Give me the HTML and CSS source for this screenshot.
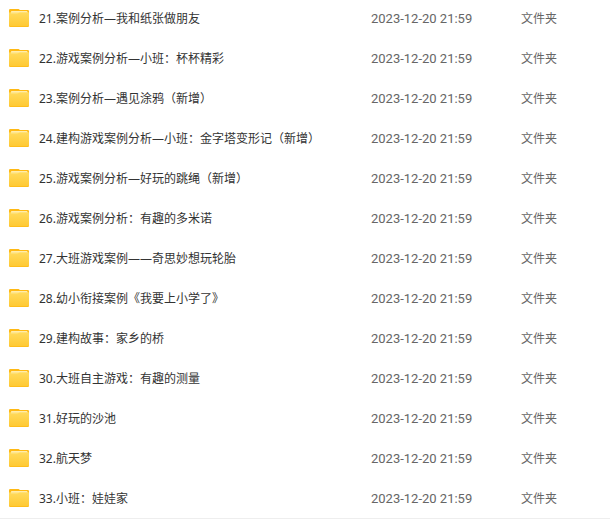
FILE: index.html
```html
<!DOCTYPE html>
<html lang="zh-CN">
<head>
    <meta charset="UTF-8">
    <meta name="viewport" content="width=device-width, initial-scale=1.0">
    <title>文件列表</title>
    <link rel="stylesheet" href="styles.css">
</head>
<body>
    <!-- folder icon shared by every row -->
    <svg class="icon-defs" width="0" height="0" aria-hidden="true">
        <defs>
            <linearGradient id="folderFront" x1="0" y1="0" x2="0" y2="1">
                <stop offset="0" stop-color="#ffdc61"/>
                <stop offset="1" stop-color="#ffc933"/>
            </linearGradient>
            <linearGradient id="folderPaper" x1="0" y1="0" x2="0" y2="1">
                <stop offset="0" stop-color="#fff0bd"/>
                <stop offset="1" stop-color="#ffdc61"/>
            </linearGradient>
            <symbol id="folder" viewBox="0 0 20 20">
                <path fill="#ffb914" d="M0 1.2Q0 0 1.2 0H9.4Q10.2 0 10.8 1H18.8Q20 1 20 2.2V16.8Q20 18 18.8 18H1.2Q0 18 0 16.8Z"/>
                <path fill="url(#folderFront)" d="M0 4.4Q0 3.2 1 3.2H2V2.8Q2 2 3 2H17.4Q18.4 2 18.4 3H19Q20 3.2 20 4.4V16Q20 17.3 18.8 17.3H1.2Q0 17.3 0 16Z"/>
                <path fill="url(#folderPaper)" d="M2 5V3Q2 2 3 2H17.4Q18.4 2 18.4 3V3.4H10.8Q9.8 3.4 9.2 4.2Q8.6 5 7.6 5Z"/>
            </symbol>
        </defs>
    </svg>

    <table class="file-list">
        <colgroup>
            <col class="col-name">
            <col class="col-date">
            <col class="col-type">
        </colgroup>
        <tbody id="fileRows"></tbody>
    </table>

    <script>
        const folders = [
            '21.案例分析—我和纸张做朋友',
            '22.游戏案例分析—小班：杯杯精彩',
            '23.案例分析—遇见涂鸦（新增）',
            '24.建构游戏案例分析—小班：金字塔变形记（新增）',
            '25.游戏案例分析—好玩的跳绳（新增）',
            '26.游戏案例分析：有趣的多米诺',
            '27.大班游戏案例——奇思妙想玩轮胎',
            '28.幼小衔接案例《我要上小学了》',
            '29.建构故事：家乡的桥',
            '30.大班自主游戏：有趣的测量',
            '31.好玩的沙池',
            '32.航天梦',
            '33.小班：娃娃家'
        ];

        document.getElementById('fileRows').innerHTML = folders.map(name => `
            <tr>
                <td>
                    <div class="file-name">
                        <svg class="folder-icon" aria-hidden="true"><use href="#folder"/></svg>
                        <span>${name}</span>
                    </div>
                </td>
                <td class="file-date">2023-12-20 21:59</td>
                <td class="file-type">文件夹</td>
            </tr>`).join('');
    </script>
</body>
</html>
```
FILE: styles.css
```css
body {
    margin: 0;
    background-color: #fff;
    color: #333;
    font-family: "Noto Sans", "Noto Sans CJK SC", sans-serif;
    font-size: 12px;
    line-height: 16px;
}
.icon-defs {
    position: absolute;
}
.file-list {
    width: 100%;
    margin-top: -2px;
    border-collapse: separate;
    border-spacing: 0;
    border-bottom: 1px solid #eee;
    table-layout: fixed;
}
.col-date {
    width: 150px;
}
.col-type {
    width: 90px;
}
.file-list td {
    box-sizing: border-box;
    height: 40px;
    padding: 2px 0 0;
    vertical-align: middle;
    white-space: nowrap;
}
.file-name {
    display: flex;
    align-items: center;
    gap: 10px;
    padding-left: 9px;
}
.folder-icon {
    width: 20px;
    height: 20px;
    flex: none;
}
.file-list .file-date,
.file-list .file-type {
    padding-left: 1px;
    color: #666;
}
.file-date {
    font-family: Roboto, "Noto Sans", sans-serif;
    font-size: 13px;
}
```
